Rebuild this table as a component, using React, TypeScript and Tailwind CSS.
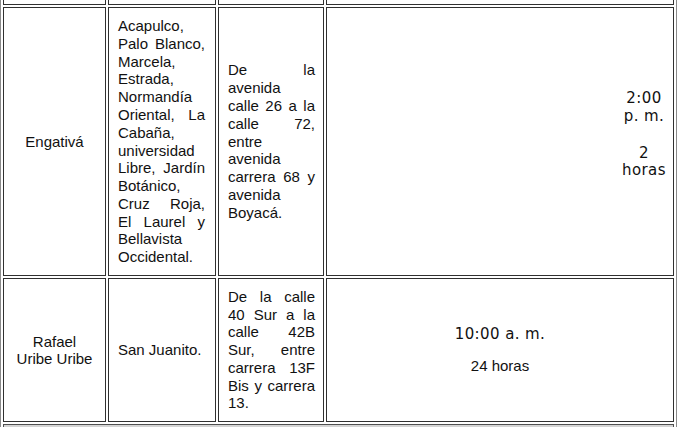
import React from 'react';

const cell = 'border border-[#303030] bg-white';
const arial = { fontFamily: '"Liberation Sans", Arial, sans-serif' };
const verdana = { fontFamily: '"DejaVu Sans", Verdana, sans-serif' };

export default function App() {
  return (
    <div className="w-[678px] h-[427px] overflow-hidden bg-white text-[#111]" style={arial}>
      <div className="w-[677px] border-l border-r border-[#8a8a8a] px-[2px]">
        {/* previous row, cut off at the top */}
        <div className="grid grid-cols-[103px_108px_106px_348px] gap-[2px] h-[5px]">
          <div className="border-l border-r border-b border-[#303030]" />
          <div className="border-l border-r border-b border-[#303030]" />
          <div className="border-l border-r border-b border-[#303030]" />
          <div className="border-l border-r border-b border-[#303030]" />
        </div>

        <div className="grid grid-cols-[103px_108px_106px_348px] gap-[2px] mt-[2px] text-[15px] leading-[17.8px]">
          {/* Engativá */}
          <div className={`${cell} h-[269px] flex items-center justify-center text-center px-[6px]`}>
            Engativá
          </div>
          <div className={`${cell} h-[269px] flex items-center pl-[9px] pr-[10px]`}>
            <p className="text-justify w-full">
              Acapulco, Palo Blanco, Marcela, Estrada, Normandía Oriental, La Cabaña, universidad Libre, Jardín Botánico, Cruz Roja, El Laurel y Bellavista Occidental.
            </p>
          </div>
          <div className={`${cell} h-[269px] flex items-center pl-[9px] pr-[8px]`}>
            <p className="text-justify w-full">
              De la avenida calle 26 a la calle 72, entre avenida carrera 68 y avenida Boyacá.
            </p>
          </div>
          <div className={`${cell} h-[269px] flex items-center justify-end pr-[6px]`}>
            <div className="w-[46px] text-center leading-[17.6px] tracking-[0.4px] mb-[13px]" style={verdana}>
              <p>2:00<br />p. m.</p>
              <p className="mt-[19px]">2<br />horas</p>
            </div>
          </div>

          {/* Rafael Uribe Uribe */}
          <div className={`${cell} h-[144px] flex items-center justify-center text-center leading-[17px]`}>
            Rafael<br />Uribe Uribe
          </div>
          <div className={`${cell} h-[144px] flex items-center pl-[9px] pr-[10px]`}>
            <p>San Juanito.</p>
          </div>
          <div className={`${cell} h-[144px] flex items-center pl-[9px] pr-[8px]`}>
            <p className="text-justify w-full">
              De la calle 40 Sur a la calle 42B Sur, entre carrera 13F Bis y carrera 13.
            </p>
          </div>
          <div className={`${cell} h-[144px] flex flex-col items-center justify-center text-center leading-[17.6px]`}>
            <p className="tracking-[0.4px]" style={verdana}>10:00 a. m.</p>
            <p className="mt-[13px]">24 horas</p>
          </div>
        </div>

        {/* next row, cut off at the bottom */}
        <div className="mt-[2px] h-[12px] border border-[#505050] bg-[#d4d4d4]" />
      </div>
    </div>
  );
}
